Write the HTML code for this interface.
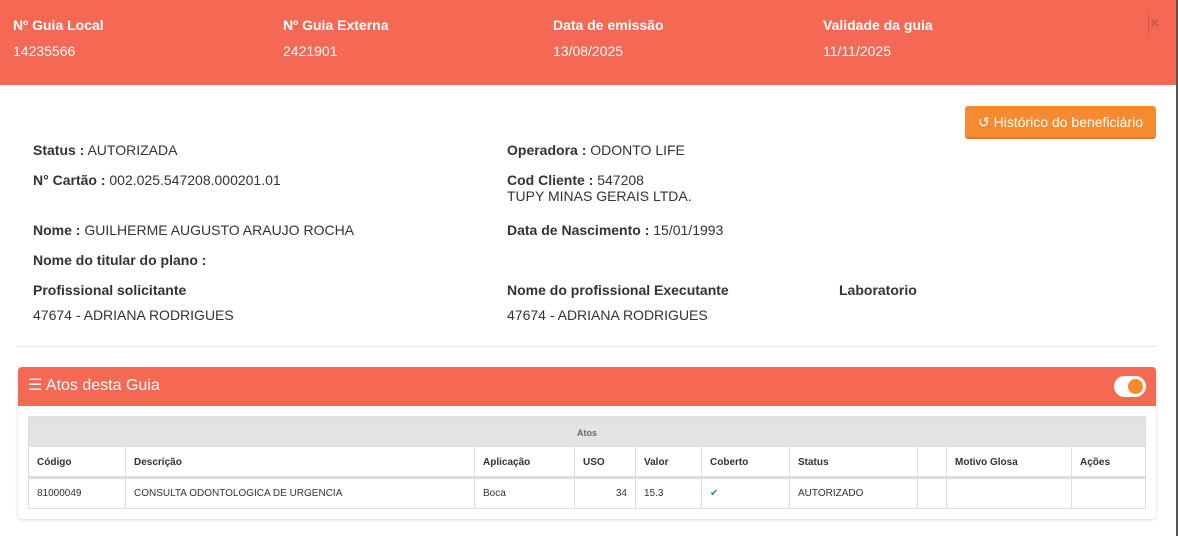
<!DOCTYPE html>
<html><head><meta charset="utf-8"><style>
*{box-sizing:border-box;margin:0;padding:0}
body{width:1178px;height:536px;background:#fff;font-family:"Liberation Sans",Arial,sans-serif;color:#333;position:relative;overflow:hidden}
.top{position:absolute;left:0;top:0;width:1176px;height:85px;background:#f46854;color:#fff}
.top .c{position:absolute;top:17px;font-size:14px}
.top .c b{display:block;margin-bottom:10px}
.edge{position:absolute;right:0;top:0;width:2px;height:536px;background:#555}
.x{position:absolute;left:1148px;top:14px;color:#c9574a;font-size:16px;font-weight:bold;border-left:1px solid #c9574a;padding-left:1px;line-height:20px}
.t{position:absolute;font-size:14px;white-space:nowrap}
.t b{font-weight:bold}
.btn{position:absolute;left:965px;top:106px;width:191px;height:33px;background:#f68a2f;border-radius:3px;color:#fff;font-size:14px;line-height:33px;text-align:center;border-bottom:2px solid #e07a24}
hr{position:absolute;left:18px;top:346px;width:1138px;border:0;border-top:1px solid #e6e6e6}
.card{position:absolute;left:18px;top:367px;width:1138px;height:152px;border-radius:4px;box-shadow:0 1px 3px rgba(0,0,0,.15);background:#fff}
.ch{height:39px;background:#f46854;border-radius:4px 4px 0 0;color:#fff;font-size:16px;line-height:37px;padding-left:10px}
.tog{position:absolute;right:10px;top:9px;width:32px;height:21px;border-radius:11px;background:#fff}
.tog i{position:absolute;right:3px;top:3px;width:15px;height:15px;border-radius:50%;background:#f68a2f}
table{position:absolute;left:10px;top:49px;width:1118px;border-collapse:collapse;font-size:10px}
td,th{border:1px solid #ddd;padding:0 8px;text-align:left;height:31px}
th{font-weight:bold;padding-top:2px}
tr.g th{background:#e3e3e3;color:#666;text-align:center;height:30px;font-weight:bold;font-size:9px}
tr.h th{border-bottom:3px solid #ddd}
</style></head><body>
<div class="top">
<div class="c" style="left:13px"><b>Nº Guia Local</b>14235566</div>
<div class="c" style="left:283px"><b>Nº Guia Externa</b>2421901</div>
<div class="c" style="left:553px"><b>Data de emissão</b>13/08/2025</div>
<div class="c" style="left:823px"><b>Validade da guia</b>11/11/2025</div>
<div class="x">×</div>
</div>
<div class="edge"></div>
<div class="btn">↺ Histórico do beneficiário</div>
<div class="t" style="left:33px;top:142px"><b>Status :</b> AUTORIZADA</div>
<div class="t" style="left:507px;top:142px"><b>Operadora :</b> ODONTO LIFE</div>
<div class="t" style="left:33px;top:172px"><b>N° Cartão :</b> 002.025.547208.000201.01</div>
<div class="t" style="left:507px;top:172px"><b>Cod Cliente :</b> 547208<br>TUPY MINAS GERAIS LTDA.</div>
<div class="t" style="left:33px;top:222px"><b>Nome :</b> GUILHERME AUGUSTO ARAUJO ROCHA</div>
<div class="t" style="left:507px;top:222px"><b>Data de Nascimento :</b> 15/01/1993</div>
<div class="t" style="left:33px;top:252px"><b>Nome do titular do plano :</b></div>
<div class="t" style="left:33px;top:282px"><b>Profissional solicitante</b></div>
<div class="t" style="left:507px;top:282px"><b>Nome do profissional Executante</b></div>
<div class="t" style="left:839px;top:282px"><b>Laboratorio</b></div>
<div class="t" style="left:33px;top:307px">47674 - ADRIANA RODRIGUES</div>
<div class="t" style="left:507px;top:307px">47674 - ADRIANA RODRIGUES</div>
<hr>
<div class="card">
<div class="ch">☰ Atos desta Guia</div>
<div class="tog"><i></i></div>
<table>
<tr class="g"><th colspan="10">Atos</th></tr>
<tr class="h"><th style="width:97px">Código</th><th style="width:349px">Descrição</th><th style="width:100px">Aplicação</th><th style="width:61px">USO</th><th style="width:66px">Valor</th><th style="width:88px">Coberto</th><th style="width:128px">Status</th><th style="width:29px"></th><th style="width:125px">Motivo Glosa</th><th>Ações</th></tr>
<tr><td>81000049</td><td>CONSULTA ODONTOLOGICA DE URGENCIA</td><td>Boca</td><td style="text-align:right">34</td><td>15.3</td><td style="color:#2a9d4a">✔</td><td>AUTORIZADO</td><td></td><td></td><td></td></tr>
</table>
</div>
</body></html>
